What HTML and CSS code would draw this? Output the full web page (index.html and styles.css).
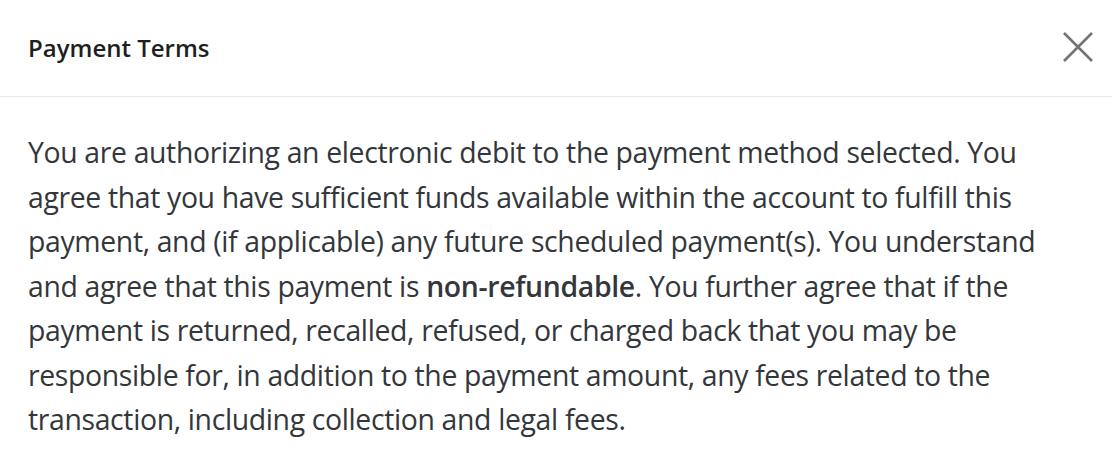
FILE: index.html
```html
<!DOCTYPE html>
<html lang="en">
<head>
<meta charset="utf-8">
<title>Payment Terms</title>
<link rel="stylesheet" href="styles.css">
</head>
<body>
<div class="modal">
  <div class="modal-header">
    <h5 class="modal-title">Payment Terms</h5>
    <button class="close" type="button" aria-label="Close">
      <svg width="30" height="30" viewBox="0 0 30 30"><path d="M1 1 L29 29 M29 1 L1 29" stroke="#737373" stroke-width="2.6" fill="none"/></svg>
    </button>
  </div>
  <div class="modal-body">
    <p>You are authorizing an electronic debit to the payment method selected. You agree that you have sufficient funds available within the account to fulfill this payment, and (if applicable) any future scheduled payment(s). You understand and agree that this payment is <strong>non-refundable</strong>. You further agree that if the payment is returned, recalled, refused, or charged back that you may be responsible for, in addition to the payment amount, any fees related to the transaction, including collection and legal fees.</p>
  </div>
</div>
</body>
</html>
```
FILE: styles.css
```css
html, body {
  margin: 0;
  padding: 0;
  background: #fff;
}
body {
  font-family: "Open Sans", "Noto Sans", sans-serif;
  color: #33373b;
}
.modal {
  width: 1112px;
}
.modal-header {
  display: flex;
  align-items: center;
  justify-content: space-between;
  height: 97px;
  padding: 0 19px 2px 28px;
  border-bottom: 1px solid #e6e9ed;
  box-sizing: border-box;
}
.modal-title {
  margin: 0;
  font-size: 24px;
  font-weight: 600;
  color: #1d1f21;
}
.close {
  background: none;
  border: 0;
  padding: 0;
  width: 30px;
  height: 30px;
  display: flex;
  cursor: pointer;
}
.modal-body {
  padding: 33px 36px 32px 28px;
}
.modal-body p {
  margin: 0;
  font-size: 28.4px;
  letter-spacing: -0.35px;
  line-height: 44.5px;
}
.modal-body strong {
  font-weight: 600;
}
```
